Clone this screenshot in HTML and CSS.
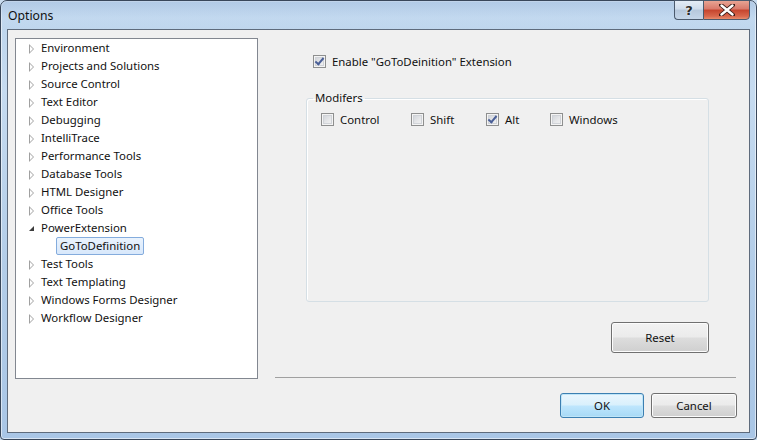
FILE: index.html
```html
<!DOCTYPE html>
<html>
<head>
<meta charset="utf-8">
<link rel="stylesheet" href="styles.css">
</head>
<body>
<div class="window">
  <div class="titlebar">
    <span class="title">Options</span>
    <div class="caption">
      <div class="cap-btn help">?</div>
      <div class="cap-btn close">
        <svg width="16" height="12" viewBox="0 0 16 12"><path d="M2 1 L14 11 M14 1 L2 11" stroke="#3a1a14" stroke-width="4.2" stroke-linecap="round"/><path d="M2.5 1.5 L13.5 10.5 M13.5 1.5 L2.5 10.5" stroke="#fff" stroke-width="2.4" stroke-linecap="round"/></svg>
      </div>
    </div>
  </div>
  <div class="client">
    <div class="tree">
      <div class="node"><span class="arrow"></span>Environment</div>
      <div class="node"><span class="arrow"></span>Projects and Solutions</div>
      <div class="node"><span class="arrow"></span>Source Control</div>
      <div class="node"><span class="arrow"></span>Text Editor</div>
      <div class="node"><span class="arrow"></span>Debugging</div>
      <div class="node"><span class="arrow"></span>IntelliTrace</div>
      <div class="node"><span class="arrow"></span>Performance Tools</div>
      <div class="node"><span class="arrow"></span>Database Tools</div>
      <div class="node"><span class="arrow"></span>HTML Designer</div>
      <div class="node"><span class="arrow"></span>Office Tools</div>
      <div class="node"><span class="arrow open"></span>PowerExtension</div>
      <div class="node child"><span class="selected">GoToDefinition</span></div>
      <div class="node"><span class="arrow"></span>Test Tools</div>
      <div class="node"><span class="arrow"></span>Text Templating</div>
      <div class="node"><span class="arrow"></span>Windows Forms Designer</div>
      <div class="node"><span class="arrow"></span>Workflow Designer</div>
    </div>
    <div class="main">
      <label class="check enable"><span class="box checked"></span>Enable "GoToDeinition" Extension</label>
      <fieldset class="group">
        <legend>Modifers</legend>
        <div class="mods">
          <label class="check m-control"><span class="box"></span>Control</label>
          <label class="check m-shift"><span class="box"></span>Shift</label>
          <label class="check m-alt"><span class="box checked"></span>Alt</label>
          <label class="check"><span class="box"></span>Windows</label>
        </div>
      </fieldset>
      <div class="btn reset">Reset</div>
      <div class="sep"></div>
      <div class="actions">
        <div class="btn ok">OK</div>
        <div class="btn cancel">Cancel</div>
      </div>
    </div>
  </div>
</div>
</body>
</html>
```
FILE: styles.css
```css
* { box-sizing: border-box; }
html, body { margin: 0; padding: 0; }
body {
  width: 757px; height: 440px; overflow: hidden;
  font-family: "Noto Sans", "Open Sans", sans-serif;
  font-size: 11.4px;
  color: #111;
  background: #c9dcef;
}
.window {
  width: 757px; height: 440px;
  border: 1px solid #39475a;
  border-radius: 7px 7px 4px 4px;
  background: linear-gradient(180deg, #bcd4ec 0%, #c6dbf0 20%, #b3cde8 60%, #a9c6e6 100%);
  display: flex; flex-direction: column;
  box-shadow: inset 0 0 0 1px rgba(255,255,255,0.55);
}
.titlebar {
  height: 28px; flex: none;
  display: flex; align-items: flex-start; justify-content: space-between;
  background: linear-gradient(180deg, rgba(170,195,225,0.6) 0%, rgba(205,225,245,0.3) 60%, rgba(190,214,240,0) 100%);
  border-radius: 6px 6px 0 0;
}
.title {
  margin: 6px 0 0 7px;
  font-size: 12.2px;
  color: #101010;
}
.caption { display: flex; margin-right: 6px; margin-top: -1px; }
.cap-btn {
  height: 20px;
  border: 1px solid #4b5a6d;
  display: flex; align-items: center; justify-content: center;
}
.help {
  width: 29px;
  border-radius: 0 0 0 4px;
  border-right: none;
  background: linear-gradient(180deg, #e3ecf6 0%, #cfdcec 45%, #b6c8dc 50%, #c5d6e9 100%);
  color: #2a2a2a;
  font-family: "DejaVu Sans", sans-serif;
  font-weight: bold;
  font-size: 13px;
  text-shadow: 0 0 2px #fff;
}
.close {
  width: 47px;
  border-radius: 0 0 4px 0;
  background: linear-gradient(180deg, #e8a493 0%, #d9786a 45%, #c5442d 50%, #d8684d 85%, #e88c6c 100%);
}
.client {
  flex: 1;
  margin: 0 6px 6px 6px;
  border: 1px solid #5e6b7c;
  background: #f0f0f0;
  display: flex;
  align-items: flex-start;
}
.tree {
  margin: 8px 0 0 7px;
  width: 243px; height: 341px;
  border: 1px solid #828790;
  background: #fff;
  flex: none;
}
.node {
  height: 18px;
  display: flex; align-items: center;
  padding-left: 13px;
  padding-bottom: 1px;
  white-space: nowrap;
  color: #111;
}
.arrow {
  width: 12px; height: 18px;
  position: relative;
  flex: none;
}
.arrow::before {
  content: ""; position: absolute;
  left: 0px; top: 5px;
  width: 0; height: 0;
  border-top: 5px solid transparent;
  border-bottom: 5px solid transparent;
  border-left: 5px solid #a0a0a0;
}
.arrow::after {
  content: ""; position: absolute;
  left: 1px; top: 7px;
  width: 0; height: 0;
  border-top: 3px solid transparent;
  border-bottom: 3px solid transparent;
  border-left: 3px solid #fff;
}
.arrow.open::before {
  left: 0px; top: 7px;
  border: none;
  border-bottom: 5px solid #3c3c3c;
  border-left: 5px solid transparent;
}
.arrow.open::after { display: none; }
.node.child { padding-left: 40px; padding-bottom: 0; }
.selected {
  height: 18px;
  padding: 0 3px 1px;
  display: flex; align-items: center;
  border: 1px solid #84acdd;
  border-radius: 2px;
  background: linear-gradient(180deg, #eaf3fd 0%, #d8e8fb 100%);
}
.main {
  margin-left: 17px;
  width: 463px;
  display: flex; flex-direction: column;
}
.check {
  display: flex; align-items: center;
  height: 13px;
  white-space: nowrap;
  color: #111;
}
.box {
  width: 13px; height: 13px; flex: none;
  border: 1px solid #8e8f8f;
  background: linear-gradient(135deg, #cbcfd5 0%, #e8e9eb 60%, #f4f4f4 100%);
  box-shadow: inset 0 0 0 1px #f4f4f4, inset 0 0 0 2px #d0d3d8;
  margin-right: 6px;
  position: relative;
}
.box.checked::after {
  content: "";
  position: absolute;
  left: 3px; top: 0px;
  width: 3px; height: 7px;
  border-right: 2px solid #4a5f97;
  border-bottom: 2px solid #4a5f97;
  transform: rotate(40deg);
}
.enable { margin: 25px 0 0 38px; }
.group {
  margin: 23px 0 0 31px;
  width: 403px; height: 211px;
  border: 1px solid #d5dfe5;
  border-radius: 3px;
  padding: 0;
  box-shadow: 1px 1px 0 #fff inset;
}
.group legend {
  margin-left: 6px;
  padding: 0 2px;
  height: 14px; line-height: 13px;
  color: #111;
}
.mods {
  display: flex;
  margin: 8px 0 0 14px;
}
.m-control { width: 90px; }
.m-shift { width: 75px; }
.m-alt { width: 64px; }
.btn {
  display: flex; align-items: center; justify-content: center;
  border: 1px solid #707070;
  border-radius: 3px;
  background: linear-gradient(180deg, #f2f2f2 0%, #ebebeb 48%, #dddddd 52%, #cfcfcf 100%);
  box-shadow: inset 0 0 0 1px #fcfcfc;
  color: #111;
}
.reset {
  margin: 20px 29px 0 0;
  align-self: flex-end;
  width: 98px; height: 31px;
}
.sep {
  margin-top: 24px;
  width: 461px; height: 1px;
  background: #a0a0a0;
}
.actions {
  margin-top: 15px;
  display: flex; justify-content: flex-end;
  gap: 7px;
  padding-right: 1px;
}
.ok { width: 84px; height: 25px; border-color: #3c7fb1; box-shadow: inset 0 0 0 1px #bfe5f8; background: linear-gradient(180deg, #eaf6fd 0%, #d9f0fc 48%, #bee6fd 52%, #a7d9f5 100%); }
.cancel { width: 86px; height: 25px; }
```
